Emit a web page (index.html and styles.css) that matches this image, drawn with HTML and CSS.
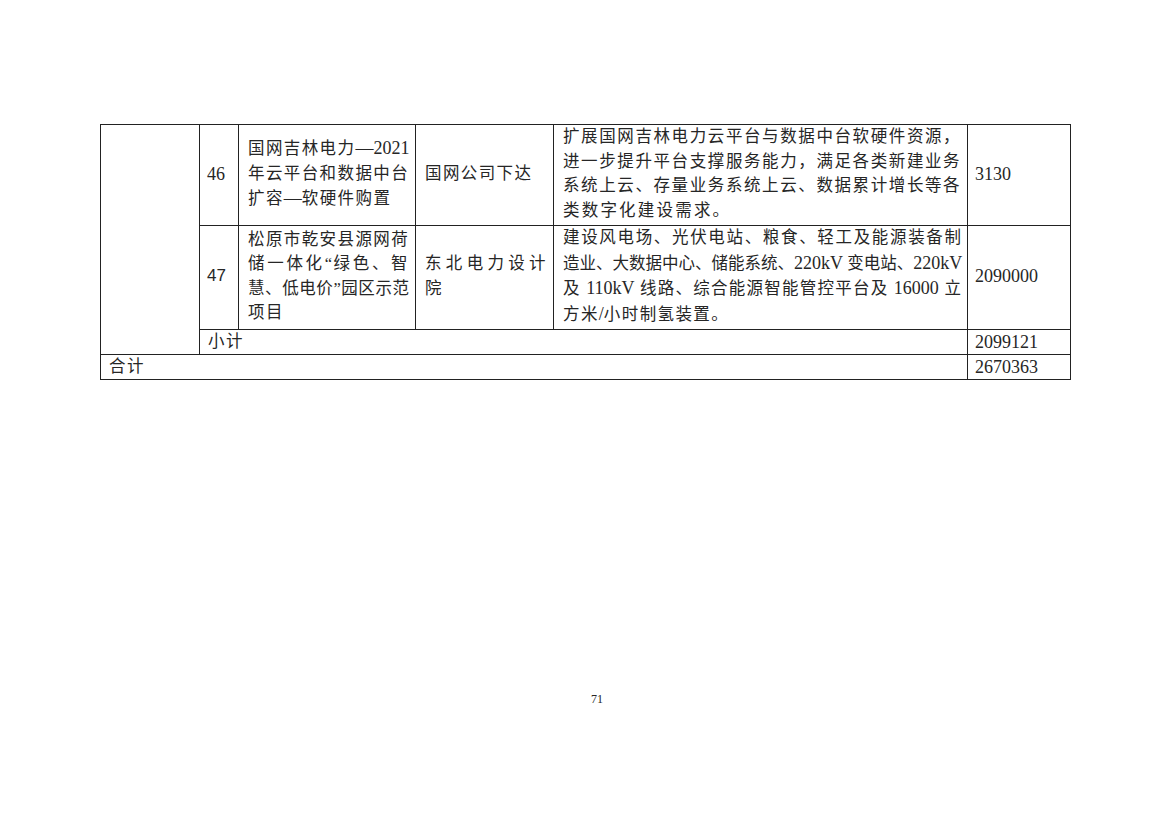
FILE: index.html
```html
<!DOCTYPE html>
<html lang="zh-CN">
<head>
<meta charset="utf-8">
<title>表</title>
<link rel="stylesheet" href="styles.css">
</head>
<body>
<div class="page">
  <table class="grid">
    <colgroup>
      <col class="w1"><col class="w2"><col class="w3"><col class="w4"><col class="w5"><col class="w6">
    </colgroup>
    <tr class="multi">
      <td rowspan="3"></td>
      <td class="num">46</td>
      <td>
        <div class="ln j">国网吉林电力<span class="lat">—2021</span></div>
        <div class="ln j">年云平台和数据中台</div>
        <div class="ln">扩容<span class="lat">—</span>软硬件购置</div>
      </td>
      <td>国网公司下达</td>
      <td>
        <div class="ln j">扩展国网吉林电力云平台与数据中台软硬件资源，</div>
        <div class="ln j">进一步提升平台支撑服务能力，满足各类新建业务</div>
        <div class="ln j">系统上云、存量业务系统上云、数据累计增长等各</div>
        <div class="ln wide">类数字化建设需求。</div>
      </td>
      <td class="num">3130</td>
    </tr>
    <tr class="multi">
      <td class="num sans">47</td>
      <td>
        <div class="ln j">松原市乾安县源网荷</div>
        <div class="ln j">储一体化<span class="q">“</span>绿色、智</div>
        <div class="ln j tight">慧、低电价<span class="q">”</span>园区示范</div>
        <div class="ln">项目</div>
      </td>
      <td>
        <div class="ln j">东北电力设计</div>
        <div class="ln">院</div>
      </td>
      <td>
        <div class="ln j tight">建设风电场、光伏电站、粮食、轻工及能源装备制</div>
        <div class="ln j tight">造业、大数据中心、储能系统、<span class="lat">220kV </span>变电站、<span class="lat">220kV</span></div>
        <div class="ln j tight">及 <span class="lat">110kV </span>线路、综合能源智能管控平台及 <span class="lat">16000 </span>立</div>
        <div class="ln">方米<span class="lat">/</span>小时制氢装置。</div>
      </td>
      <td class="num">2090000</td>
    </tr>
    <tr class="single">
      <td colspan="4">小计</td>
      <td class="num">2099121</td>
    </tr>
    <tr class="single">
      <td colspan="5">合计</td>
      <td class="num">2670363</td>
    </tr>
  </table>
  <div class="pageno">71</div>
</div>
</body>
</html>
```
FILE: styles.css
```css
html, body {
  margin: 0;
  padding: 0;
  background: #fff;
}
.page {
  width: 1169px;
  height: 826px;
  padding-top: 124px;
  box-sizing: border-box;
  font-family: "Liberation Serif", "Noto Sans CJK SC", serif;
  color: #262626;
}
.grid {
  margin-left: 100px;
  width: 970px;
  border-collapse: collapse;
  table-layout: fixed;
  font-size: 16.5px;
  letter-spacing: 1.4px;
}
.w1 { width: 99px; }
.w2 { width: 39px; }
.w3 { width: 177px; }
.w4 { width: 138px; }
.w5 { width: 414px; }
.w6 { width: 103px; }
.grid td {
  border: 1px solid #222;
  padding: 0 6px 2px 9px;
  vertical-align: middle;
  line-height: 24.5px;
  overflow: hidden;
}
.multi td {
  height: 98px;
}
.single td {
  height: 24px;
  line-height: 24px;
  padding: 0 6px 0 8px;
}
.ln {
  white-space: nowrap;
}
.j {
  text-align: justify;
  text-align-last: justify;
}
.tight {
  letter-spacing: 0;
}
.wide {
  letter-spacing: 2.2px;
}
.lat {
  font-family: "Liberation Serif", serif;
  font-size: 18px;
  letter-spacing: 0;
}
.q {
  font-family: "Liberation Serif", serif;
  letter-spacing: 0;
}
.grid td.num {
  font-family: "Liberation Serif", serif;
  font-size: 18px;
  letter-spacing: 0;
  padding-left: 7px;
  padding-right: 2px;
}
.grid td.sans {
  font-family: "Liberation Sans", sans-serif;
  font-size: 17px;
}
.pageno {
  margin-top: 312px;
  padding-left: 25px;
  text-align: center;
  font-family: "Liberation Serif", serif;
  font-size: 12px;
  line-height: 14px;
}
```
